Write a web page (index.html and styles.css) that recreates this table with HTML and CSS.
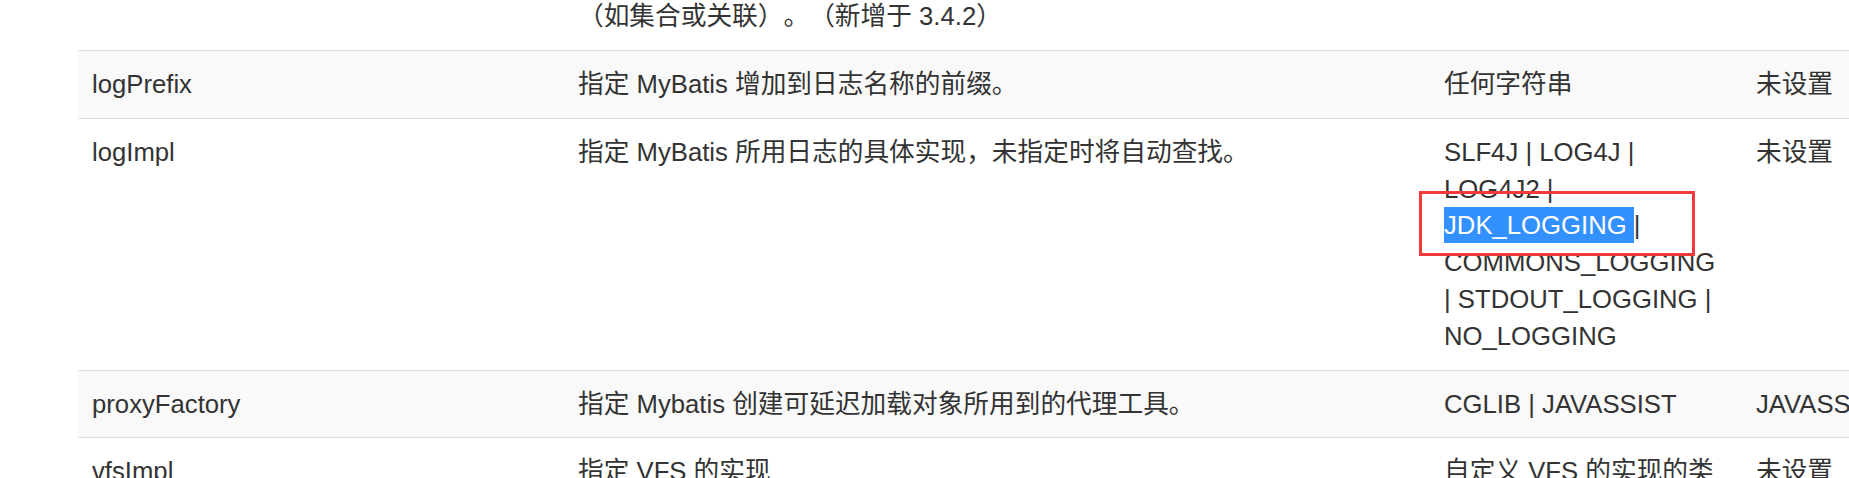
FILE: index.html
```html
<!DOCTYPE html>
<html lang="zh-CN">
<head>
<meta charset="utf-8">
<title>MyBatis settings</title>
<link rel="stylesheet" href="styles.css">
</head>
<body>
<div class="page">
  <table class="settings">
    <colgroup>
      <col class="c-name">
      <col class="c-desc">
      <col class="c-vals">
      <col class="c-def">
    </colgroup>
    <tbody>
      <tr>
        <td>returnInstanceForEmptyRow</td>
        <td>当返回行的所有列都是空时，MyBatis默认返回 null。<br>当开启这个设置时，MyBatis会返回一个空实例。<br>请注意，它也适用于嵌套的结果集<br>（如集合或关联）。（新增于 3.4.2）</td>
        <td>true | false</td>
        <td>false</td>
      </tr>
      <tr class="striped">
        <td>logPrefix</td>
        <td>指定 MyBatis 增加到日志名称的前缀。</td>
        <td>任何字符串</td>
        <td>未设置</td>
      </tr>
      <tr>
        <td>logImpl</td>
        <td>指定 MyBatis 所用日志的具体实现，未指定时将自动查找。</td>
        <td>SLF4J | LOG4J | LOG4J2 | <span class="sel">JDK_LOGGING </span>| COMMONS_LOGGING | STDOUT_LOGGING | NO_LOGGING</td>
        <td>未设置</td>
      </tr>
      <tr class="striped">
        <td>proxyFactory</td>
        <td>指定 Mybatis 创建可延迟加载对象所用到的代理工具。</td>
        <td>CGLIB | JAVASSIST</td>
        <td>JAVASSIST （MyBatis 3.3 以上）</td>
      </tr>
      <tr>
        <td>vfsImpl</td>
        <td>指定 VFS 的实现</td>
        <td>自定义 VFS 的实现的类全限定名，以逗号分隔。</td>
        <td>未设置</td>
      </tr>
    </tbody>
  </table>
  <div class="mark"></div>
</div>
</body>
</html>
```
FILE: styles.css
```css
html, body {
  margin: 0;
  padding: 0;
  overflow: hidden;
  background: #fff;
}

.page {
  display: flow-root;
  position: relative;
  padding-left: 78px;
  font-family: "Liberation Sans", "Noto Sans CJK SC", sans-serif;
  font-size: 25.7px;
  line-height: 36.8px;
  color: #333;
  text-spacing-trim: space-all;
}

.settings {
  table-layout: fixed;
  width: 2164px;
  border-collapse: separate;
  border-spacing: 0;
  margin-top: -128.2px;
}

.c-name { width: 486px; }
.c-desc { width: 866px; }
.c-vals { width: 312px; }
.c-def  { width: 500px; }

.settings td {
  padding: 15px 14px;
  vertical-align: top;
  border-top: 1px solid #dddddd;
  word-wrap: break-word;
}

.settings tr.striped td {
  background: #f9f9f9;
}

.sel {
  background: #3390ff;
  color: #fff;
  padding: 4px 0;
}

.mark {
  position: absolute;
  left: 1419px;
  top: 191px;
  width: 276px;
  height: 65px;
  box-sizing: border-box;
  border: 3px solid #f23a3c;
  pointer-events: none;
}
```
